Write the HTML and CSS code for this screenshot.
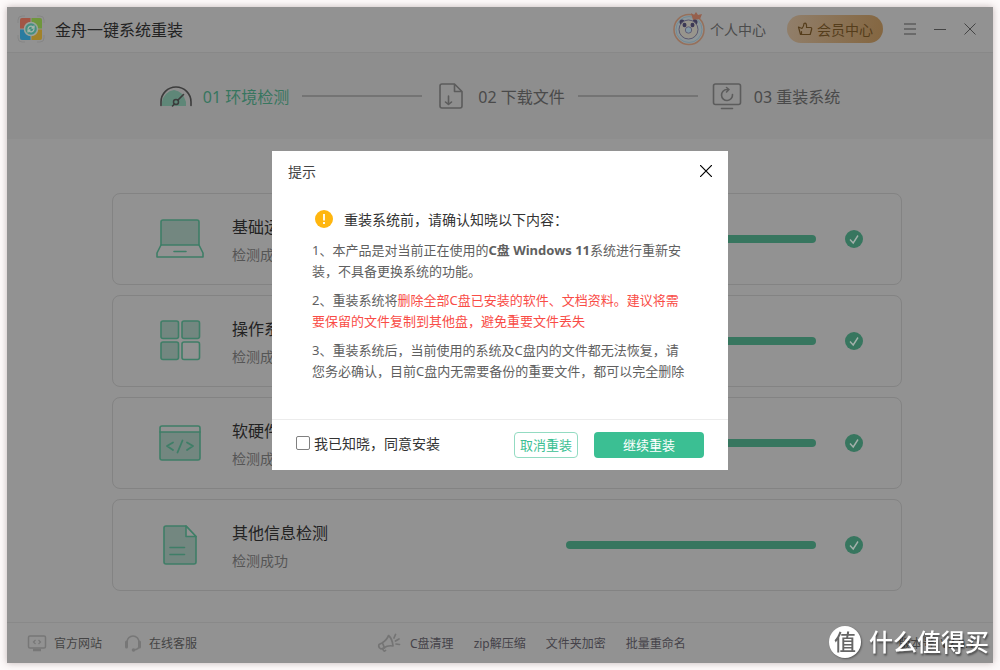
FILE: index.html
```html
<!DOCTYPE html>
<html lang="zh-CN">
<head>
<meta charset="utf-8">
<title>金舟一键系统重装</title>
<link rel="stylesheet" href="styles.css">
</head>
<body>
<div class="window">
  <header class="titlebar">
    <svg class="logo" width="28" height="28" viewBox="0 0 28 28" fill="none">
      <path d="M1 8V5q0-4 4-4h3M20 1h3q4 0 4 4v3M27 20v3q0 4-4 4h-3M8 27H5q-4 0-4-4v-3" stroke="#868686"/>
      <path d="M5 3h8.500v10.500H3V5q0-2 2-2z" fill="#a25645"/>
      <path d="M14.500 3H23q2 0 2 2v8.500H14.500z" fill="#6f963c"/>
      <path d="M3 14.500h10.500V25H5q-2 0-2-2z" fill="#2a7ca0"/>
      <path d="M14.500 14.500H25V23q0 2-2 2h-8.500z" fill="#a18228"/>
      <circle cx="14" cy="14" r="6.500" fill="#459080" stroke="#9ba39b" stroke-width="1.500"/>
      <path d="M11 14a3 3 0 0 1 5-2l1 1M17 14a3 3 0 0 1-5 2l-1-1M17 10.500V13h-2.500M11 17.500V15h2.500" stroke="#a6b5ab" stroke-width="1.300"/>
    </svg>
    <h1 class="app-name">金舟一键系统重装</h1>
    <a class="account" href="#">
      <svg width="34" height="34" viewBox="0 0 34 34" fill="none">
        <circle cx="17" cy="17.500" r="15" fill="#8e9698" stroke="#96705b" stroke-width="1.500"/>
        <circle cx="17" cy="17.500" r="13" stroke="#718b98"/>
        <path d="M19 1l3 2 2-3 2 3 4-1-2 5-7 1z" fill="#96604d"/>
        <circle cx="10" cy="10" r="2.500" fill="#3c3855"/><circle cx="23" cy="10" r="2.500" fill="#3c3855"/>
        <circle cx="16.500" cy="17.500" r="9.500" fill="#98958d" stroke="#5b5870"/>
        <ellipse cx="12.500" cy="13" rx="2" ry="2.300" fill="#3c3855"/><ellipse cx="20.500" cy="13" rx="2" ry="2.300" fill="#3c3855"/>
        <circle cx="16.500" cy="18" r="3.200" fill="#8297a3" stroke="#615e76"/>
      </svg>
      <span>个人中心</span>
    </a>
    <button class="vip" type="button">
      <svg width="16" height="14" viewBox="0 0 16 14" fill="none" stroke="#553d1b" stroke-width="1.200" stroke-linejoin="round" stroke-linecap="round">
        <path d="M3.500 12.500L1.500 5l3.500 1.500Q7 4 7 1.500q2-1 2.500 1.500L9.500 5.500h4.500q1 .5.700 1.500l-1.500 5.500zM4.500 9.500V12"/>
      </svg>
      <span>会员中心</span>
    </button>
    <div class="controls">
      <button class="control" type="button" aria-label="菜单"><svg width="12" height="12" viewBox="0 0 12 12" stroke="#5e5e5e" stroke-width="1.300"><path d="M0 1h12M0 6h12M0 11h12"/></svg></button>
      <button class="control" type="button" aria-label="最小化"><svg width="12" height="12" viewBox="0 0 12 12" stroke="#444"><path d="M0 6.500h12"/></svg></button>
      <button class="control" type="button" aria-label="关闭"><svg width="12" height="12" viewBox="0 0 12 12" stroke="#444"><path d="M.5.500l11 11M11.500.500l-11 11"/></svg></button>
    </div>
  </header>

  <nav class="steps">
    <div class="step step-active">
      <svg width="32" height="32" viewBox="0 0 32 32" fill="none" stroke-linecap="round">
        <path d="M2 26v-4a14 14 0 0 1 12-12q9 1 12 12v4z" fill="#5f8778"/>
        <path d="M1 25.500V22a15 15 0 0 1 30 0v3.500" stroke="#3c3c3c" stroke-width="1.600"/>
        <circle cx="16" cy="22" r="2.500" stroke="#3c3c3c" stroke-width="1.500"/>
        <path d="M18 20l5.500-5.500M14.500 24l-2 2" stroke="#3c3c3c" stroke-width="1.600"/>
      </svg>
      <span>01 环境检测</span>
    </div>
    <span class="step-line"></span>
    <div class="step">
      <svg width="32" height="32" viewBox="0 0 32 32" fill="none" stroke="#5c5c5c" stroke-width="1.600" stroke-linejoin="round" stroke-linecap="round">
        <path d="M7 4h12.500L27 11.500V26q0 2-2 2H7q-2 0-2-2V6q0-2 2-2zM19.500 4v7.500H27M13.500 16v8.500M10.500 22l3 2.500 3-2.500"/>
      </svg>
      <span>02 下载文件</span>
    </div>
    <span class="step-line"></span>
    <div class="step">
      <svg width="32" height="32" viewBox="0 0 32 32" fill="none" stroke="#5c5c5c" stroke-width="1.600" stroke-linejoin="round" stroke-linecap="round">
        <rect x="2.500" y="4" width="27" height="20.500" rx="2"/>
        <path d="M10.500 28.500h11M21.500 14.500A5.500 5.500 0 1 1 16 9.500h2M15.500 7.500l2.500 2-2.500 2.500"/>
      </svg>
      <span>03 重装系统</span>
    </div>
  </nav>

  <main class="checks">
    <section class="check">
      <svg width="48" height="48" viewBox="0 0 48 48" fill="none" stroke="#3f7e67" stroke-width="1.600" stroke-linejoin="round" stroke-linecap="round">
        <path d="M5 30V7q0-2 2-2h34q2 0 2 2v23z" fill="#738780"/>
        <path d="M5 30L1 38v4h46v-4l-4-8M18 36.500h12"/>
      </svg>
      <div class="check-text"><h2>基础运行环境检测</h2><p>检测成功</p></div>
      <div class="bar"></div>
      <svg class="tick" width="18" height="18" viewBox="0 0 18 18" fill="none"><circle cx="9" cy="9" r="9" fill="#37765f"/><path d="M5 9.500L8.200 13 13 5.500" stroke="#a3b0ab" stroke-width="1.400"/></svg>
    </section>
    <section class="check">
      <svg width="48" height="48" viewBox="0 0 48 48" stroke="#3f7e67" stroke-width="1.600" fill="#738780">
        <rect x="5" y="4" width="17.500" height="17.500" rx="2"/><rect x="26" y="4" width="17.500" height="17.500" rx="2"/>
        <rect x="5" y="25" width="17.500" height="17.500" rx="2"/><rect x="26" y="25" width="17.500" height="17.500" rx="2" fill="none"/>
      </svg>
      <div class="check-text"><h2>操作系统检测</h2><p>检测成功</p></div>
      <div class="bar"></div>
      <svg class="tick" width="18" height="18" viewBox="0 0 18 18" fill="none"><circle cx="9" cy="9" r="9" fill="#37765f"/><path d="M5 9.500L8.200 13 13 5.500" stroke="#a3b0ab" stroke-width="1.400"/></svg>
    </section>
    <section class="check">
      <svg width="48" height="48" viewBox="0 0 48 48" fill="none" stroke="#3f7e67" stroke-width="1.600" stroke-linejoin="round" stroke-linecap="round">
        <path d="M4 13h40v26q0 2-2 2H6q-2 0-2-2z" fill="#738780"/>
        <path d="M4 13V9q0-2 2-2h36q2 0 2 2v4"/>
        <path d="M17 23.500l-6 3.500 6 4M31 23.500l6 3.500-6 4M26.500 21.500l-5 12" stroke-width="1.800"/>
      </svg>
      <div class="check-text"><h2>软硬件信息检测</h2><p>检测成功</p></div>
      <div class="bar"></div>
      <svg class="tick" width="18" height="18" viewBox="0 0 18 18" fill="none"><circle cx="9" cy="9" r="9" fill="#37765f"/><path d="M5 9.500L8.200 13 13 5.500" stroke="#a3b0ab" stroke-width="1.400"/></svg>
    </section>
    <section class="check">
      <svg width="48" height="48" viewBox="0 0 48 48" fill="none" stroke="#3f7e67" stroke-width="1.600" stroke-linejoin="round" stroke-linecap="round">
        <path d="M10 5h20l10 10.500V41q0 2-2 2H10q-2 0-2-2V7q0-2 2-2z" fill="#738780"/>
        <path d="M30 5v10.500h10z" fill="#929292"/><path d="M14 26.500h14.500M14 33.500h14.500"/>
      </svg>
      <div class="check-text"><h2>其他信息检测</h2><p>检测成功</p></div>
      <div class="bar"></div>
      <svg class="tick" width="18" height="18" viewBox="0 0 18 18" fill="none"><circle cx="9" cy="9" r="9" fill="#37765f"/><path d="M5 9.500L8.200 13 13 5.500" stroke="#a3b0ab" stroke-width="1.400"/></svg>
    </section>
  </main>

  <footer class="statusbar">
    <div class="support">
      <a href="#"><svg width="20" height="18" viewBox="0 0 20 18" fill="none" stroke="#777" stroke-width="1.500"><rect x="1.500" y="2" width="17" height="12" rx="1.500"/><path d="M8.500 6L6.500 8l2 2M11.500 6l2 2-2 2" stroke-width="1.200"/><path d="M6 16h8" stroke-width="2.500"/></svg><span>官方网站</span></a>
      <a href="#"><svg width="18" height="18" viewBox="0 0 18 18" fill="none" stroke="#777" stroke-width="1.600"><path d="M3 12V8a6 6 0 0 1 12 0v4q0 3.500-5.500 4"/><path d="M2.500 8v5M15.500 8v5" stroke-width="3" stroke-linecap="round"/><circle cx="9.500" cy="16" r="1" fill="#777"/></svg><span>在线客服</span></a>
    </div>
    <div class="tools">
      <svg width="24" height="20" viewBox="0 0 24 20" fill="none" stroke="#747474" stroke-width="1.700" stroke-linejoin="round" stroke-linecap="round"><path d="M2 11.500l3-1.500Q10 7 11.500 2.500q4 3.500 4.500 10.500-5-1-9.500 2L4 16q-3-1-2-4.500zM5.500 10l2 5M6 16.500q1 2.500 2.500 1M17 5l1.500-3.500M18.500 8L22 6M19 11l3.500.500"/></svg>
      <a href="#">C盘清理</a><a href="#">zip解压缩</a><a href="#">文件夹加密</a><a href="#">批量重命名</a>
    </div>
    <span class="version">版本号: V2.0.1</span>
  </footer>

  <div class="overlay">
    <div class="dialog" role="dialog" aria-modal="true" aria-labelledby="dialog-title">
      <div class="dialog-head">
        <h2 id="dialog-title">提示</h2>
        <button class="dialog-close" type="button" aria-label="关闭"><svg width="12" height="12" viewBox="0 0 12 12" stroke="#000" stroke-width="1.200"><path d="M0 0l12 12M12 0L0 12"/></svg></button>
      </div>
      <div class="dialog-body">
        <div class="lead">
          <svg width="18" height="18" viewBox="0 0 18 18"><circle cx="9" cy="9" r="9" fill="#ffb60f"/><path d="M9 4v6.500M9 12v2" stroke="#fff" stroke-width="1.800"/></svg>
          <strong>重装系统前，请确认知晓以下内容：</strong>
        </div>
        <p>1、本产品是对当前正在使用的<b>C盘 Windows 11</b>系统进行重新安装，不具备更换系统的功能。</p>
        <p>2、重装系统将<em>删除全部C盘已安装的软件、文档资料。建议将需要保留的文件复制到其他盘，避免重要文件丢失</em></p>
        <p>3、重装系统后，当前使用的系统及C盘内的文件都无法恢复，请您务必确认，目前C盘内无需要备份的重要文件，都可以完全删除</p>
      </div>
      <div class="dialog-foot">
        <label class="agree"><input type="checkbox"><span>我已知晓，同意安装</span></label>
        <button class="btn btn-cancel" type="button">取消重装</button>
        <button class="btn btn-primary" type="button">继续重装</button>
      </div>
    </div>
  </div>
</div>
<div class="watermark"><span class="seal">值</span><span>什么值得买</span></div>
</body>
</html>
```

FILE: styles.css
```css
* { box-sizing: border-box; }
body {
  margin: 0;
  padding: 7px;
  background: #fdfafa;
  font-family: "Noto Sans", "Noto Sans CJK SC", sans-serif;
  font-size: 14px;
  color: #444;
}
h1, h2, p { margin: 0; font-weight: 400; }
a { color: inherit; text-decoration: none; }
button { font-family: inherit; border: 0; padding: 0; background: none; cursor: pointer; }
svg { display: block; flex: none; }

.window {
  position: relative;
  display: flex;
  flex-direction: column;
  min-height: calc(100vh - 14px);
  background: #929292;
  box-shadow: 0 0 7px rgba(90, 60, 60, .35);
}

.titlebar {
  display: flex;
  align-items: center;
  height: 46px;
  padding: 0 17px 2px 10px;
  border-bottom: 1px solid #888;
}
.app-name { margin-left: 10px; font-size: 16px; color: #222; }
.account { display: flex; align-items: center; gap: 4px; margin-left: auto; color: #4b4b4b; }
.vip {
  display: flex;
  align-items: center;
  justify-content: center;
  gap: 4px;
  width: 96px;
  height: 28px;
  margin: 0 21px;
  border-radius: 14px;
  background: linear-gradient(100deg, #917f6b, #846640);
  color: #553d1b;
  font-size: 14px;
}
.controls { display: flex; gap: 18px; }
.control { width: 12px; height: 12px; }

.steps {
  display: flex;
  align-items: center;
  justify-content: center;
  height: 86px;
  background: #8e8e8e;
  font-size: 16px;
}
.step { display: flex; align-items: center; gap: 11px; color: #4a4a4a; }
.step-active { color: #37765f; }
.step-line { width: 120px; height: 2px; margin: 0 13px; background: #747474; }

.checks {
  display: flex;
  flex: 1;
  flex-direction: column;
  gap: 10px;
  padding: 54px 91px 31px 105px;
}
.check {
  display: flex;
  align-items: center;
  height: 92px;
  padding: 0 38px 0 43px;
  border: 1px solid #838383;
  border-radius: 8px;
}
.check-text { margin-left: 28px; padding-top: 4px; }
.check-text h2 { font-size: 16px; line-height: 24px; color: #222; }
.check-text p { margin-top: 4px; line-height: 24px; color: #555; }
.bar { width: 250px; height: 8px; margin-left: auto; border-radius: 4px; background: #37765f; }
.tick { margin-left: 29px; }

.statusbar {
  display: flex;
  align-items: center;
  height: 41px;
  padding: 0 18px 0 20px;
  border-top: 1px solid #898989;
  font-size: 12px;
}
.support, .tools, .support a { display: flex; align-items: center; }
.support { gap: 22px; margin-right: 180px; }
.support a { gap: 7px; }
.tools { gap: 20px; color: #454249; }
.tools svg { margin-right: -11px; }
.version { margin-left: auto; }

.overlay {
  position: absolute;
  inset: 0;
  display: flex;
  align-items: flex-start;
  justify-content: center;
  padding-top: 144px;
}
.dialog { width: 456px; background: #fff; }
.dialog-head {
  display: flex;
  align-items: center;
  justify-content: space-between;
  height: 40px;
  padding: 0 16px;
}
.dialog-head h2 { font-size: 14px; }
.dialog-close { width: 12px; height: 12px; }
.dialog-body {
  min-height: 228px;
  padding: 17px 38px 0 40px;
  font-size: 13px;
  line-height: 21px;
  color: #606060;
}
.dialog-body p { margin-top: 8px; }
.dialog-body em { font-style: normal; color: #f94c46; }
.lead { display: flex; align-items: center; gap: 11px; margin-bottom: 10px; padding-left: 3px; height: 22px; color: #333; }
.dialog-body .lead + p { margin-top: 0; }
.lead strong { font-size: 14px; font-weight: 400; }
.dialog-foot {
  display: flex;
  align-items: center;
  gap: 16px;
  height: 51px;
  padding: 0 24px;
  border-top: 1px solid #ececec;
}
.agree { display: flex; align-items: center; gap: 4px; margin-right: auto; padding-bottom: 4px; color: #333; }
.agree input {
  appearance: none;
  width: 14px;
  height: 14px;
  margin: 0;
  border: 1px solid #808080;
  border-radius: 2px;
  background: #fff;
}
.agree input:checked { background: #3bbf93; }
.btn { height: 26px; border-radius: 4px; font-size: 13px; line-height: 22px; }
.btn-cancel { width: 64px; border: 1px solid #93dbc2; color: #3bbf93; }
.btn-primary { width: 110px; background: #3bbf93; color: #fff; }

.watermark {
  position: fixed;
  right: 11px;
  bottom: 10px;
  display: flex;
  align-items: center;
  gap: 8px;
  color: #fff;
  font-size: 24px;
  font-weight: 500;
  line-height: 36px;
  text-shadow: 1px 2px 2px rgba(0, 0, 0, .5);
}
.seal {
  width: 32px;
  height: 32px;
  border-radius: 50%;
  background: #fff;
  color: #666;
  font-size: 22px;
  line-height: 31px;
  text-align: center;
  text-shadow: none;
  box-shadow: 1px 1px 2px rgba(0, 0, 0, .4);
}
```
